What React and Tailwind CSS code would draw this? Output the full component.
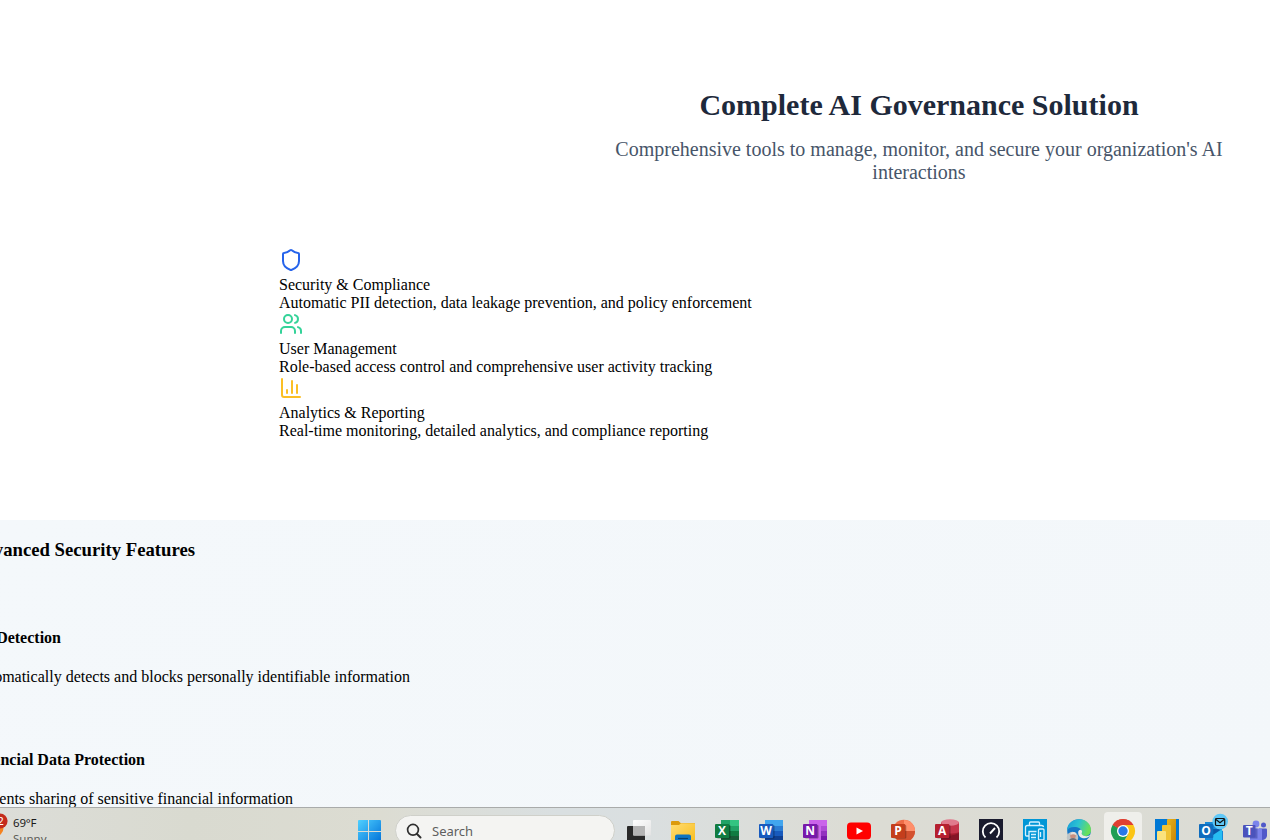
import React from "react";
import { Shield, Users, ChartColumn } from "lucide-react";

const features = [
  {
    icon: <Shield size={24} className="inline-block align-top text-[#2563eb]" />,
    title: "Security & Compliance",
    text: "Automatic PII detection, data leakage prevention, and policy enforcement",
  },
  {
    icon: <Users size={24} className="inline-block align-top text-[#34d399]" />,
    title: "User Management",
    text: "Role-based access control and comprehensive user activity tracking",
  },
  {
    icon: <ChartColumn size={24} className="inline-block align-top text-[#fbbf24]" />,
    title: "Analytics & Reporting",
    text: "Real-time monitoring, detailed analytics, and compliance reporting",
  },
];

function Icon({ children }) {
  return (
    <svg width="24" height="24" viewBox="0 0 24 24" className="block shrink-0 overflow-visible">
      {children}
    </svg>
  );
}

function Letter({ children, x = 7.1, y = 16.1 }) {
  return (
    <text x={x} y={y} fontSize="12" fontWeight="700" fill="#fff" textAnchor="middle" fontFamily="'Open Sans', sans-serif">
      {children}
    </text>
  );
}

function StartIcon() {
  return (
    <Icon>
      <defs>
        <linearGradient id="win" x1="0" y1="0" x2="1" y2="1">
          <stop offset="0" stopColor="#4fd0ff" />
          <stop offset="1" stopColor="#0070d8" />
        </linearGradient>
      </defs>
      <path fill="url(#win)" d="M2 1h9v11H1V2a1 1 0 0 1 1-1zM12 1h11a1 1 0 0 1 1 1v10H12zM1 13h10v11H2a1 1 0 0 1-1-1zM12 13h12v10a1 1 0 0 1-1 1H12z" />
    </Icon>
  );
}

function TaskViewIcon() {
  return (
    <Icon>
      <defs>
        <linearGradient id="tv" x1="0" y1="0" x2="1" y2="1">
          <stop offset="0" stopColor="#ffffff" />
          <stop offset="1" stopColor="#e3e3e3" />
        </linearGradient>
      </defs>
      <rect x="0" y="7" width="18" height="16" rx="1" fill="#292929" />
      <rect x="6" y="1" width="18" height="15.5" rx="1" fill="url(#tv)" />
      <path d="M6 7h12v9.500H7a1 1 0 0 1-1-1z" fill="#b4b4b4" />
    </Icon>
  );
}

function FolderIcon() {
  return (
    <Icon>
      <defs>
        <linearGradient id="fold" x1="0" y1="0" x2="1" y2="1">
          <stop offset="0" stopColor="#ffdc74" />
          <stop offset="1" stopColor="#f8bd1c" />
        </linearGradient>
      </defs>
      <path d="M0 3a1 1 0 0 1 1-1h6.500l2.200 2H23a1 1 0 0 1 1 1v5H0z" fill="#dc9a0d" />
      <path d="M0 6h8l2-1.800h13a1 1 0 0 1 1 1v18.800H0z" fill="url(#fold)" />
      <path d="M4 24v-6.500a2 2 0 0 1 2-2h12a2 2 0 0 1 2 2V24z" fill="#0f74c0" />
      <path d="M7 19.500h10" stroke="#07406e" strokeWidth="1.200" />
    </Icon>
  );
}

function ExcelIcon() {
  return (
    <Icon>
      <rect x="6" y="1" width="9" height="6" fill="#21a366" />
      <rect x="15" y="1" width="9" height="6" fill="#33c481" />
      <rect x="6" y="7" width="9" height="5" fill="#107c41" />
      <rect x="15" y="7" width="9" height="5" fill="#21a366" />
      <rect x="6" y="12" width="9" height="11" fill="#185c37" />
      <rect x="15" y="12" width="9" height="5" fill="#107c41" />
      <rect x="15" y="17" width="9" height="6" fill="#185c37" />
      <rect x="2" y="6" width="13.500" height="13.500" rx="1" fill="#000" opacity=".35" />
      <rect x="0" y="5" width="14.300" height="14" rx="1" fill="#107c41" />
      <Letter>X</Letter>
    </Icon>
  );
}

function WordIcon() {
  return (
    <Icon>
      <rect x="6" y="1" width="18" height="6" fill="#41a5ee" />
      <rect x="6" y="7" width="18" height="5" fill="#2b7cd3" />
      <rect x="6" y="12" width="18" height="5" fill="#185abd" />
      <rect x="6" y="17" width="18" height="6" fill="#103f91" />
      <rect x="2" y="6" width="13.500" height="13.500" rx="1" fill="#000" opacity=".3" />
      <rect x="0" y="5" width="14.300" height="14" rx="1" fill="#185abd" />
      <Letter>W</Letter>
    </Icon>
  );
}

function OneNoteIcon() {
  return (
    <Icon>
      <rect x="6" y="1" width="18" height="22" fill="#ca64ea" />
      <rect x="18" y="7" width="6" height="5" fill="#ae4bd5" />
      <rect x="18" y="12" width="6" height="5" fill="#9332bf" />
      <rect x="18" y="17" width="6" height="6" fill="#7719aa" />
      <rect x="2" y="6" width="13.500" height="13.500" rx="1" fill="#000" opacity=".35" />
      <rect x="0" y="5" width="14.300" height="14" rx="1" fill="#7719aa" />
      <Letter>N</Letter>
    </Icon>
  );
}

function YouTubeIcon() {
  return (
    <Icon>
      <rect x="0" y="3.500" width="24" height="17" rx="4" fill="#ff0000" />
      <path d="M9.500 8.500l6.500 3.500-6.500 3.500z" fill="#fff" />
    </Icon>
  );
}

function PowerPointIcon() {
  return (
    <Icon>
      <circle cx="12.800" cy="12" r="11.200" fill="#ed6c47" />
      <path d="M13 1a11 11 0 0 1 11 11H13z" fill="#ff8f6b" />
      <path d="M2 12h22a11 11 0 0 1-22 0z" fill="#d35230" />
      <rect x="2" y="6" width="13.300" height="13.500" rx="1" fill="#000" opacity=".3" />
      <rect x="0" y="5" width="14.300" height="14" rx="1" fill="#c43e1c" />
      <Letter>P</Letter>
    </Icon>
  );
}

function AccessIcon() {
  return (
    <Icon>
      <path d="M6 3h18v20H6z" fill="#a31b2e" />
      <path d="M6 4h18v9c-4 2-14 2-18 0z" fill="#c5344b" />
      <path d="M6 17c5 0 13 0 18-3v9H6z" fill="#841426" />
      <ellipse cx="15" cy="3.500" rx="9" ry="3.300" fill="#e07a8d" />
      <rect x="2" y="6" width="13.500" height="13.500" rx="1" fill="#000" opacity=".3" />
      <rect x="0" y="5" width="14.300" height="14" rx="1" fill="#b5202f" />
      <Letter>A</Letter>
    </Icon>
  );
}

function GaugeIcon() {
  return (
    <Icon>
      <rect width="24" height="24" fill="#1a1b2e" />
      <path d="M6.500 18.500a8.200 8.200 0 1 1 11 0" fill="none" stroke="#fff" strokeWidth="1.800" />
      <path d="M11 14.500l5-5.500" stroke="#fff" strokeWidth="1.900" />
    </Icon>
  );
}

function PrinterIcon() {
  return (
    <Icon>
      <rect width="24" height="24" fill="#0096d6" />
      <g fill="none" stroke="#d5f1ff" strokeWidth="1.300">
        <path d="M6.500 6.500V4q0-1 1-1h8q1 0 1 1v2.500" />
        <path d="M6 17H3.500q-1 0-1-1V8.500q0-2 2-2h14q2 0 2 1.500M6 22v-9.500h7.500" />
        <path d="M8 15.500h5M8 18.500h5M8 21.500h5" />
        <rect x="15.500" y="10" width="5.500" height="11" rx="1" />
        <path d="M17.500 13v5" />
      </g>
    </Icon>
  );
}

function EdgeIcon() {
  return (
    <Icon>
      <defs>
        <linearGradient id="edge" x1="0" y1="0" x2="1" y2=".3">
          <stop offset="0" stopColor="#169bd9" />
          <stop offset=".5" stopColor="#2bc2d2" />
          <stop offset="1" stopColor="#68df5b" />
        </linearGradient>
      </defs>
      <circle cx="12" cy="12" r="11.800" fill="#1677c7" />
      <path d="M0 10C1 4 6 .2 12 .2 19 .2 24 5 24 11c0 4-3 6-6 6s-4-1-3.500-2.500S15 9 9 8c-5-.5-8 1-9 4z" fill="url(#edge)" />
      <path d="M11.200 13.500c0-3 3-3.800 3.800-1.500.5 1.500-1 2 0 3.600 1.800 2 6 2.200 8.800.2-2.500 5-12.600 5-12.600-2.300z" fill="#e9ebe6" />
      <circle cx="5.500" cy="18.500" r="5.700" fill="#bdc3c5" />
      <circle cx="6" cy="17" r="2.800" fill="#c88e7e" />
      <path d="M3.500 16q0-3 3-3t2.500 3q-3-1.500-5.500 0z" fill="#e4e0dc" />
      <path d="M1.500 23q.5-4 4.500-4t4.500 4z" fill="#6c6e77" />
    </Icon>
  );
}

function ChromeIcon() {
  return (
    <Icon>
      <path d="M12 12L1.600 6A12 12 0 0 1 22.400 6z" fill="#df4032" />
      <path d="M12 12L1.600 6A12 12 0 0 0 12 24z" fill="#1e9e54" />
      <path d="M12 12V6h10.400A12 12 0 0 1 12 24l5.200-9z" fill="#fbc516" />
      <path d="M1.600 6l5.200 9L12 24l5.200-9z" fill="#1e9e54" />
      <path d="M1.600 6A12 12 0 0 1 22.400 6H12l-5.200 3z" fill="#df4032" />
      <circle cx="12" cy="12" r="6" fill="#fff" />
      <circle cx="12" cy="12" r="4.700" fill="#2878e8" />
    </Icon>
  );
}

function PowerBiIcon() {
  return (
    <Icon>
      <defs>
        <linearGradient id="pbi" x1="0" y1="0" x2="1" y2="1">
          <stop offset="0" stopColor="#e8b21c" />
          <stop offset="1" stopColor="#c78505" />
        </linearGradient>
      </defs>
      <rect width="24" height="24" fill="#0078d4" />
      <path d="M12 1a1 1 0 0 1 1-1h8v24h-9z" fill="url(#pbi)" />
      <path d="M7 7a1 1 0 0 1 1-1h7a1 1 0 0 1 1 1v17H7z" fill="#efc233" />
      <path d="M2 13a1 1 0 0 1 1-1h7a1 1 0 0 1 1 1v11H2z" fill="#fae27d" />
    </Icon>
  );
}

function OutlookIcon() {
  return (
    <Icon>
      <path d="M6 3h12v6l6 3v12H6z" fill="#1689d8" />
      <path d="M14 14l9-5v15H14z" fill="#27bdf2" />
      <path d="M14 10h9l-9 6z" fill="#0b58a8" />
      <rect x="0" y="5" width="14.300" height="14" rx="1" fill="#0f6cbd" />
      <Letter>O</Letter>
      <circle cx="21.200" cy="2.600" r="7.800" fill="#60c8f7" />
      <rect x="16.500" y="-.5" width="9.200" height="7" rx="1" fill="none" stroke="#111" strokeWidth="1.200" />
      <path d="M17 .5l4 3.200 4-3.200" fill="none" stroke="#111" strokeWidth="1.200" />
    </Icon>
  );
}

function TeamsIcon() {
  return (
    <Icon>
      <circle cx="13" cy="5" r="3.400" fill="#7b83eb" />
      <circle cx="20.500" cy="6" r="2.500" fill="#5059c9" />
      <path d="M16 9.500h7a1 1 0 0 1 1 1V17q-1 4-5 4h-3z" fill="#5059c9" />
      <path d="M7 9.500h11a1 1 0 0 1 1 1V24H7z" fill="#7b83eb" />
      <path d="M7 9.500h7.500v10H7z" fill="#5961c3" />
      <rect x="0" y="6" width="12.500" height="12.500" rx="1" fill="#4b53bc" />
      <Letter x={6.200} y={16.200}>T</Letter>
    </Icon>
  );
}

const apps = [
  TaskViewIcon, FolderIcon, ExcelIcon, WordIcon, OneNoteIcon, YouTubeIcon, PowerPointIcon, AccessIcon,
  GaugeIcon, PrinterIcon, EdgeIcon, ChromeIcon, PowerBiIcon, OutlookIcon, TeamsIcon,
];

function Taskbar() {
  return (
    <footer className="flex h-[33px] w-full shrink-0 items-start overflow-hidden border-t border-[#a9abaa] bg-[linear-gradient(90deg,#dcddd8_0,#d9dad0_190px,#dcdcd2_380px,#d9dfe1_560px,#dadfe0_640px,#dcdcd4_860px,#dbdcd5_100%)] font-['Noto_Sans',sans-serif]">
      <div className="flex w-[357px] shrink-0">
        <div className="h-8 w-3 shrink-0 pt-[5px]">
          <svg width="12" height="27" viewBox="0 0 12 27" className="block">
            <circle cx="-5" cy="15" r="8.500" fill="#f5821f" />
            <circle cx="0" cy="8" r="7.600" fill="#c42b1c" />
            <text x="-2.500" y="12" fontSize="11" fill="#fff" fontFamily="'Noto Sans', sans-serif">2</text>
          </svg>
        </div>
        <div className="pt-[7px] text-[11.500px] leading-4 text-[#1b1b1b]">
          <div className="pl-px tracking-[-0.2px]">69°F</div>
          <div className="pl-px text-[#5e5e5a]">Sunny</div>
        </div>
      </div>
      <div className="mt-[11px] w-[38px] shrink-0">
        <StartIcon />
      </div>
      <div className="mt-[7px] flex h-[31px] w-[220px] shrink-0 items-center rounded-full border border-[#cfd0ca] bg-[#f4f4f2] pl-[10px]">
        <svg width="16" height="16" viewBox="0 0 16 16" fill="none" stroke="#2f2f2f" strokeWidth="1.700" strokeLinecap="round">
          <circle cx="7" cy="6.800" r="5.400" />
          <path d="M11 11l3.500 3.500" strokeWidth="2" />
        </svg>
        <span className="ml-[10px] text-[13px] text-[#5f5f5f]">Search</span>
      </div>
      <div className="flex shrink-0 pl-[2px]">
        {apps.map((App, i) => (
          <div key={i} className="flex h-8 w-11 shrink-0 justify-center pt-1">
            <div className={i === 11 ? "flex h-9 w-[38px] justify-center rounded bg-[#efefeb] pt-[7px]" : "flex w-[38px] justify-center pt-[7px]"}>
              <App />
            </div>
          </div>
        ))}
      </div>
    </footer>
  );
}

export default function App() {
  return (
    <div className="flex h-[840px] w-full flex-col overflow-hidden bg-white font-['Liberation_Serif',serif] text-base leading-[18px] text-black">
      <section className="h-[520px] shrink-0 pl-[279px] pt-[88px]">
        <div className="flex w-[1280px] flex-col items-center text-center">
          <h2 className="text-[30px] font-bold leading-[34px] text-[#1e293b]">Complete AI Governance Solution</h2>
          <p className="mt-4 w-[640px] text-xl leading-[23px] text-[#475569]">
            Comprehensive tools to manage, monitor, and secure your organization's AI interactions
          </p>
        </div>
        <div className="mt-16">
          {features.map((f) => (
            <div key={f.title}>
              <div className="h-7">{f.icon}</div>
              <div>{f.title}</div>
              <div>{f.text}</div>
            </div>
          ))}
        </div>
      </section>
      <section className="min-h-0 flex-1 overflow-hidden whitespace-nowrap bg-[linear-gradient(135deg,#f4f8fb,#f3f7fa)] pt-[19px]">
        <h3 className="flex w-[195px] justify-end text-[18.720px] font-bold leading-[21px]">Advanced Security Features</h3>
        <h4 className="mt-[69px] flex w-[61px] justify-end font-bold">PII Detection</h4>
        <p className="mt-[21px] flex w-[410px] justify-end">Automatically detects and blocks personally identifiable information</p>
        <h4 className="mt-[65px] flex w-[145px] justify-end font-bold">Financial Data Protection</h4>
        <p className="mt-[21px] flex w-[293px] justify-end">Prevents sharing of sensitive financial information</p>
      </section>
      <Taskbar />
    </div>
  );
}
